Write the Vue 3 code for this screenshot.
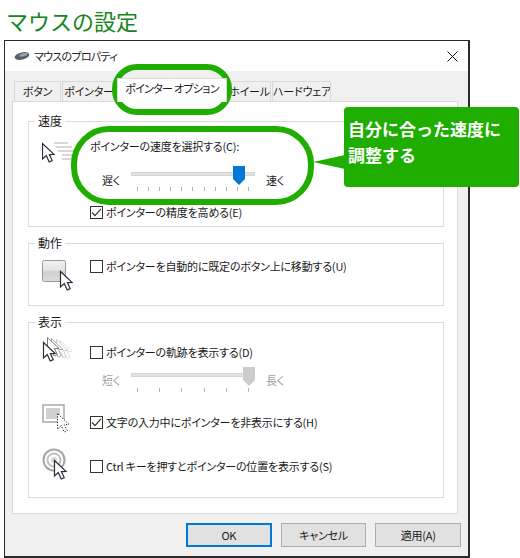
<script setup>
const arrow = 'M0.5 0.5 V16 L4.3 12.6 L7.2 19 L10.2 17.6 L7.4 11.6 L12 11.4 Z'
const speedTicks = 11
const trailTicks = 6
const trail = [18, 14, 9, 5]
</script>

<template>
  <div class="page">
    <h1 class="heading">マウスの設定</h1>

    <div class="dialog">
      <div class="titlebar">
        <svg class="mouse-icon" width="16" height="10" viewBox="0 0 16 10">
          <ellipse cx="8" cy="5" rx="7.5" ry="3.6" transform="rotate(-14 8 5)" fill="#5b6168" />
          <ellipse cx="9.5" cy="3.8" rx="4.2" ry="1.6" transform="rotate(-14 9.5 3.8)" fill="#9aa2aa" />
        </svg>
        <span class="title-text">マウスのプロパティ</span>
        <svg class="close" width="11" height="11" viewBox="0 0 11 11">
          <path d="M0.5 0.5 L10.5 10.5 M10.5 0.5 L0.5 10.5" stroke="#111" stroke-width="1" fill="none" />
        </svg>
      </div>

      <div class="body">
        <div class="tabs">
          <div class="tab tab-button">ボタン</div>
          <div class="tab tab-pointer">ポインター</div>
          <div class="tab tab-active">ポインター オプション</div>
          <div class="tab tab-wheel">ホイール</div>
          <div class="tab tab-hw">ハードウェア</div>
        </div>

        <div class="panel">
          <fieldset class="group group-speed">
            <legend>速度</legend>
            <div class="row">
              <svg class="icon" width="40" height="26" viewBox="0 0 40 26">
                <path d="M12 2 H26 M14 6 H30 M16 10 H32 M20 14 H32 M20 18 H30" stroke="#d8d8d8" stroke-width="2" fill="none" />
                <path :d="arrow" transform="translate(0 2)" fill="#fff" stroke="#2b2b3a" stroke-width="1.2" />
              </svg>
              <div class="row-main">
                <div class="label">ポインターの速度を選択する(C):</div>
                <div class="slider-row">
                  <span class="end">遅く</span>
                  <div class="slider">
                    <div class="track"></div>
                    <svg class="thumb thumb-speed" width="12" height="19" viewBox="0 0 12 19">
                      <path d="M0 0 H12 V13 L6 19 L0 13 Z" fill="#0078d7" />
                    </svg>
                    <div class="ticks ticks-speed">
                      <i v-for="n in speedTicks" :key="n"></i>
                    </div>
                  </div>
                  <span class="end">速く</span>
                </div>
                <label class="check check-speed">
                  <span class="box">
                    <svg width="11" height="11" viewBox="0 0 11 11">
                      <path d="M1 5.5 L4 8.7 L10 1.8" stroke="#333" stroke-width="1.2" fill="none" />
                    </svg>
                  </span>
                  ポインターの精度を高める(E)
                </label>
              </div>
            </div>
          </fieldset>

          <fieldset class="group group-action">
            <legend>動作</legend>
            <div class="row">
              <svg class="icon" width="40" height="38" viewBox="0 0 40 38">
                <defs>
                  <linearGradient id="btnFill" x1="0" y1="0" x2="0" y2="1">
                    <stop offset="0" stop-color="#f2f2f2" />
                    <stop offset="0.45" stop-color="#e4e4e4" />
                    <stop offset="0.55" stop-color="#d0d0d0" />
                    <stop offset="1" stop-color="#dcdcdc" />
                  </linearGradient>
                </defs>
                <rect x="0.5" y="0.5" width="23" height="21" rx="2" fill="url(#btnFill)" stroke="#9a9a9a" />
                <path :d="arrow" transform="translate(18 11)" fill="#fff" stroke="#2b2b3a" stroke-width="1.2" />
              </svg>
              <label class="check">
                <span class="box"></span>
                ポインターを自動的に既定のボタン上に移動する(U)
              </label>
            </div>
          </fieldset>

          <fieldset class="group group-display">
            <legend>表示</legend>
            <div class="row row-trail">
              <svg class="icon" width="40" height="28" viewBox="0 0 40 28">
                <path
                  v-for="(dx, i) in trail"
                  :key="dx"
                  :d="arrow"
                  :transform="`translate(${dx} ${3 - i})`"
                  fill="#fff"
                  :stroke="['#e2e2e2', '#cccccc', '#a8a8a8', '#777'][i]"
                />
                <path :d="arrow" transform="translate(1 5)" fill="#fff" stroke="#2b2b3a" stroke-width="1.2" />
              </svg>
              <div class="row-main">
                <label class="check">
                  <span class="box"></span>
                  ポインターの軌跡を表示する(D)
                </label>
                <div class="slider-row slider-row-off">
                  <span class="end">短く</span>
                  <div class="slider">
                    <div class="track"></div>
                    <svg class="thumb thumb-trail" width="12" height="19" viewBox="0 0 12 19">
                      <path d="M0 0 H12 V13 L6 19 L0 13 Z" fill="#cccccc" />
                    </svg>
                    <div class="ticks ticks-trail">
                      <i v-for="n in trailTicks" :key="n"></i>
                    </div>
                  </div>
                  <span class="end">長く</span>
                </div>
              </div>
            </div>

            <div class="row row-hide">
              <svg class="icon" width="40" height="36" viewBox="0 0 40 36">
                <rect x="1" y="1" width="21" height="17" fill="#fff" stroke="#a8a8a8" stroke-width="1.5" />
                <rect x="4" y="4" width="14" height="11" fill="#d0d0d0" />
                <path :d="arrow" transform="translate(15 9)" fill="#fff" stroke="#222" stroke-dasharray="1.2 1.6" />
              </svg>
              <label class="check">
                <span class="box">
                  <svg width="11" height="11" viewBox="0 0 11 11">
                    <path d="M1 5.5 L4 8.7 L10 1.8" stroke="#333" stroke-width="1.2" fill="none" />
                  </svg>
                </span>
                文字の入力中にポインターを非表示にする(H)
              </label>
            </div>

            <div class="row row-locate">
              <svg class="icon" width="40" height="36" viewBox="0 0 40 36">
                <circle cx="12" cy="12" r="10.5" fill="#fff" stroke="#a6a6a6" stroke-width="2" />
                <circle cx="12" cy="12" r="6.5" fill="#fff" stroke="#c0c0c0" stroke-width="2" />
                <circle cx="12" cy="12" r="3" fill="#d8d8d8" />
                <path :d="arrow" transform="translate(12 12)" fill="#fff" stroke="#2b2b3a" stroke-width="1.2" />
              </svg>
              <label class="check">
                <span class="box"></span>
                Ctrl キーを押すとポインターの位置を表示する(S)
              </label>
            </div>
          </fieldset>
        </div>

        <div class="actions">
          <button class="btn btn-ok">OK</button>
          <button class="btn btn-cancel">キャンセル</button>
          <button class="btn btn-apply">適用(A)</button>
        </div>
      </div>
    </div>

    <!-- 吹き出しと強調の枠 -->
    <div class="ring ring-tab"></div>
    <div class="ring ring-speed"></div>
    <svg class="tail" width="32" height="16" viewBox="0 0 32 16">
      <path d="M0 8 L32 1 V15 Z" fill="#1fae00" />
    </svg>
    <div class="callout">自分に合った速度に<br />調整する</div>
  </div>
</template>

<style scoped>
.page {
  position: relative;
  width: 520px;
  height: 558px;
  overflow: hidden;
  background: #fff;
  font-family: "Noto Sans CJK JP", "Noto Sans", sans-serif;
  font-size: 11px;
  letter-spacing: -0.2px;
  font-feature-settings: "palt";
  color: #1a1a1a;
}

.heading {
  height: 40px;
  margin: 0;
  padding-left: 6px;
  font-size: 22px;
  line-height: 40px;
  font-weight: 400;
  letter-spacing: 0;
  font-feature-settings: normal;
  color: #15861a;
}

.dialog {
  width: 466px;
  height: 518px;
  margin-left: 4px;
  box-sizing: border-box;
  border: 1px solid #2a2a2a;
  border-right-width: 2px;
  border-bottom-width: 2px;
  display: flex;
  flex-direction: column;
}

.titlebar {
  height: 30px;
  flex: none;
  display: flex;
  align-items: center;
  padding: 0 10px 0 9px;
  background: #fff;
}

.mouse-icon {
  margin-right: 4px;
}

.title-text {
  color: #222;
  letter-spacing: -0.7px;
}

.close {
  margin-left: auto;
}

.body {
  flex: 1;
  background: #f0f0f0;
  padding: 10px 0 0 7px;
}

.tabs {
  display: flex;
  height: 20px;
  padding-left: 2px;
}

.tab {
  box-sizing: border-box;
  height: 20px;
  border: 1px solid #d9d9d9;
  border-bottom: none;
  margin-right: 1px;
  text-align: center;
  line-height: 18px;
  white-space: nowrap;
  overflow: hidden;
}

.tab-button { width: 47px; }
.tab-pointer { width: 54px; }
.tab-wheel { width: 43px; }
.tab-hw { width: 59px; }

.tab-active {
  width: 110px;
  height: 24px;
  margin: -3px 1px 0 0;
  background: #fff;
  position: relative;
  z-index: 1;
  letter-spacing: -0.7px;
}

.panel {
  width: 446px;
  height: 413px;
  box-sizing: border-box;
  background: #fff;
  border: 1px solid #d9d9d9;
  padding: 13px 13px 0 15px;
}

.group {
  box-sizing: border-box;
  margin: 0 0 9px;
  padding: 0;
  border: 1px solid #dcdcdc;
  min-width: 0;
}

.group legend {
  margin-left: 6px;
  padding: 0 3px;
  line-height: 14px;
  font-size: 12px;
  letter-spacing: 0;
}

.group-speed { height: 113px; margin-top: -1px; }
.group-action { height: 70px; }
.group-display { height: 183px; }

.row {
  display: flex;
  align-items: flex-start;
}

.icon {
  flex: none;
  width: 40px;
  margin: 0 8px 0 13px;
}

.group-speed .row { padding-top: 9px; }
.group-action .row { padding-top: 7px; }
.group-speed .icon { margin-top: 4px; }
.group-action .icon { margin-top: 3px; }

.row-main {
  flex: 1;
  min-width: 0;
}

.label {
  line-height: 18px;
}

.slider-row {
  display: flex;
  align-items: flex-start;
  margin-top: 13px;
  padding-left: 12px;
}

.end {
  width: 29px;
  padding-top: 4px;
  line-height: 16px;
}

.slider {
  position: relative;
  width: 124px;
  height: 30px;
  margin-right: 11px;
}

.track {
  height: 4px;
  margin-top: 4px;
  background: #e3e3e3;
  border: 1px solid #d6d6d6;
  box-sizing: border-box;
}

.thumb {
  position: absolute;
  top: -2px;
}

.thumb-speed { left: 102px; }
.thumb-trail { left: 112px; }

.ticks {
  display: flex;
  justify-content: space-between;
  padding: 0 6px;
  margin-top: 11px;
}

.ticks i {
  width: 1px;
  height: 4px;
  background: #b4b4b4;
}

.check {
  display: flex;
  align-items: center;
  gap: 3px;
  height: 18px;
}

.check-speed {
  margin-top: 5px;
}

.box {
  flex: none;
  width: 13px;
  height: 13px;
  box-sizing: border-box;
  border: 1px solid #333;
  background: #fff;
  display: flex;
  align-items: center;
  justify-content: center;
}

.row-trail { padding-top: 14px; }
.row-trail .icon { margin-top: -6px; }

.slider-row-off {
  margin-top: 8px;
  color: #a0a0a0;
}

.slider-row-off .end {
  padding-top: 3px;
}

.row-hide {
  margin-top: 13px;
}

.row-hide .icon { margin-top: -8px; }
.row-hide .check { margin-top: 1px; }

.row-locate {
  margin-top: 17px;
}

.row-locate .icon { margin-top: -9px; }

.actions {
  display: flex;
  gap: 9px;
  padding: 9px 0 0 174px;
}

.btn {
  width: 85.7px;
  height: 24px;
  padding: 0;
  box-sizing: border-box;
  background: #e1e1e1;
  border: 1px solid #adadad;
  font: inherit;
  letter-spacing: inherit;
  font-feature-settings: "palt";
  color: #1a1a1a;
}

.btn-ok {
  border: 2px solid #0078d7;
}

.ring {
  position: absolute;
  box-sizing: border-box;
  border: 6px solid #1fae00;
  background: transparent;
  pointer-events: none;
}

.ring-tab {
  left: 112px;
  top: 64px;
  width: 120px;
  height: 51px;
  border-radius: 25px;
}

.ring-speed {
  left: 71px;
  top: 126px;
  width: 243px;
  height: 79px;
  border-radius: 38px;
}

.tail {
  position: absolute;
  left: 313px;
  top: 154px;
}

.callout {
  position: absolute;
  left: 344px;
  top: 107px;
  width: 175px;
  height: 80px;
  box-sizing: border-box;
  padding: 9px 0 0 4px;
  border-radius: 4px;
  background: #1fae00;
  color: #fff;
  font-size: 17px;
  letter-spacing: 0;
  font-feature-settings: normal;
  line-height: 26px;
  font-weight: 700;
}
</style>
